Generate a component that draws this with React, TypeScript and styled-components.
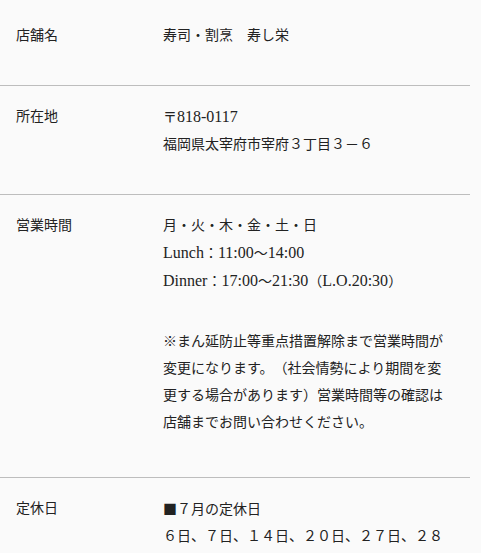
import { FC, ReactNode } from 'react';
import { createGlobalStyle, styled } from 'styled-components';

const GlobalStyle = createGlobalStyle`
  html, body {
    margin: 0;
    padding: 0;
    background: #fafafa;
  }
  body {
    font-family: "Liberation Serif", "Noto Sans CJK JP", serif;
    color: #222;
    text-spacing-trim: space-all;
  }
`;

const S = {
  Table: styled.div`
    width: 470px;
    padding-top: 5px;
  `,

  Row: styled.dl`
    display: grid;
    grid-template-columns: 147px 290px;
    margin: 0;
    padding: 17px 0 36px 16px;
    border-bottom: 1px solid #bdbdbd;
  `,

  Label: styled.dt`
    font-size: 14px;
    line-height: 27px;
  `,

  Value: styled.dd`
    margin: 0;
    font-size: 14px;
    line-height: 27px;
  `,

  Line: styled.p`
    margin: 0;
  `,

  Latin: styled.span`
    font-family: "Liberation Serif", serif;
    font-size: 16px;
  `,

  Square: styled.span`
    font-family: "Noto Sans CJK JP", sans-serif;
  `,

  Note: styled.p`
    margin: 33px 0 5px;
  `,
};

interface InfoRow {
  id: number;
  label: string;
  lines: ReactNode[];
  note?: string;
}

const rows: InfoRow[] = [
  { id: 1, label: '店舗名', lines: ['寿司・割烹　寿し栄'] },
  {
    id: 2,
    label: '所在地',
    lines: [
      <>
        〒<S.Latin>818-0117</S.Latin>
      </>,
      '福岡県太宰府市宰府３丁目３－６',
    ],
  },
  {
    id: 3,
    label: '営業時間',
    lines: [
      '月・火・木・金・土・日',
      <>
        <S.Latin>Lunch</S.Latin>：<S.Latin>11:00</S.Latin>～<S.Latin>14:00</S.Latin>
      </>,
      <>
        <S.Latin>Dinner</S.Latin>：<S.Latin>17:00</S.Latin>～<S.Latin>21:30</S.Latin>（
        <S.Latin>L.O.20:30</S.Latin>）
      </>,
    ],
    note:
      '※まん延防止等重点措置解除まで営業時間が変更になります。（社会情勢により期間を変更する場合があります）営業時間等の確認は店舗までお問い合わせください。',
  },
  {
    id: 4,
    label: '定休日',
    lines: [
      <>
        <S.Square>■</S.Square>７月の定休日
      </>,
      '６日、７日、１４日、２０日、２７日、２８日、２９日',
    ],
  },
];

const App: FC = () => {
  return (
    <>
      <GlobalStyle />
      <S.Table>
        {rows.map(row => (
          <S.Row key={row.id}>
            <S.Label>{row.label}</S.Label>
            <S.Value>
              {row.lines.map((line, i) => (
                <S.Line key={i}>{line}</S.Line>
              ))}
              {row.note && <S.Note>{row.note}</S.Note>}
            </S.Value>
          </S.Row>
        ))}
      </S.Table>
    </>
  );
};

export default App;
